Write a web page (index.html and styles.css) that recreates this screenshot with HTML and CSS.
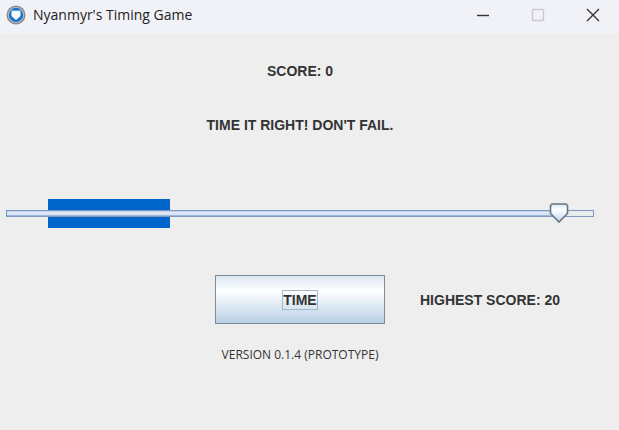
FILE: index.html
```html
<!DOCTYPE html>
<html lang="en">
<head>
<meta charset="utf-8">
<meta name="viewport" content="width=device-width, initial-scale=1">
<title>Nyanmyr's Timing Game</title>
<link rel="stylesheet" href="styles.css">
</head>
<body>
<header class="titlebar">
  <svg class="app-icon" viewBox="0 0 20 20" aria-hidden="true">
    <circle cx="10" cy="10" r="9.500" fill="#858b93"/>
    <circle cx="10" cy="10" r="8" fill="#c3c8ce"/>
    <circle cx="10" cy="10" r="7.200" fill="#2273c6"/>
    <path d="M5.500 5.800h9v5.200L10 15l-4.500-4z" fill="#f8fbff" stroke="#8fb4dc" stroke-width=".6"/>
  </svg>
  <h1 class="title">Nyanmyr's Timing Game</h1>
  <div class="window-controls">
    <button class="window-button" type="button" aria-label="Minimize">
      <svg viewBox="0 0 14 14" aria-hidden="true"><path d="M1 7.500h12"/></svg>
    </button>
    <button class="window-button" type="button" aria-label="Maximize" disabled>
      <svg viewBox="0 0 14 14" aria-hidden="true"><rect x="1.500" y="1.500" width="11" height="11" rx="1"/></svg>
    </button>
    <button class="window-button" type="button" aria-label="Close">
      <svg viewBox="0 0 14 14" aria-hidden="true"><path d="M1 1l12 12M13 1L1 13"/></svg>
    </button>
  </div>
</header>
<main class="game">
  <p class="label score">SCORE: 0</p>
  <label class="label message" for="timing">TIME IT RIGHT! DON'T FAIL.</label>
  <div class="timeline">
    <div class="target"></div>
    <input class="slider" id="timing" type="range" min="0" max="1000" value="957">
  </div>
  <div class="actions">
    <button class="time-button" type="button"><span class="time-text">TIME</span></button>
    <p class="label">HIGHEST SCORE: 20</p>
  </div>
  <p class="version">VERSION 0.1.4 (PROTOTYPE)</p>
</main>
</body>
</html>
```
FILE: styles.css
```css
* {
  box-sizing: border-box;
}

body {
  margin: 0;
  min-height: 100vh;
  background: #eeeeee;
  color: #333333;
  font-family: "Liberation Sans", Arial, sans-serif;
}

.titlebar {
  display: flex;
  align-items: center;
  height: 34px;
  padding: 0 0 4px 6px;
  background: #f1f2f8;
}

.app-icon {
  width: 20px;
  height: 20px;
  margin-right: 7px;
}

.title {
  margin: 0;
  color: #222222;
  font: 400 14px/20px "Open Sans", "Noto Sans", sans-serif;
}

.window-controls {
  display: flex;
  margin-left: auto;
}

.window-button {
  display: grid;
  place-items: center;
  width: 55px;
  height: 30px;
  padding: 0 0 0 3px;
  border: 0;
  background: none;
  color: #333333;
}

.window-button:disabled {
  color: #c8c9ce;
}

.window-button svg {
  width: 14px;
  height: 14px;
  fill: none;
  stroke: currentColor;
  stroke-width: 1.4;
}

.game {
  display: flex;
  flex-direction: column;
  padding: 28px 25px 0 6px;
}

.label {
  margin: 0;
  font-size: 14px;
  font-weight: 700;
  line-height: 18px;
}

.score,
.message {
  margin-bottom: 36px;
  text-align: center;
}

.timeline {
  display: grid;
  align-items: center;
  height: 29px;
  margin-top: 29px;
}

.target,
.slider {
  grid-area: 1 / 1;
}

.target {
  width: 21%;
  height: 29px;
  margin-left: 7%;
  background: #0066cc;
  background-clip: content-box;
  padding: 0 1px;
}

.slider {
  width: 100%;
  height: 21px;
  margin: 0;
  appearance: none;
  background: none;
}

.slider::-webkit-slider-runnable-track {
  height: 7px;
  border: 1px solid #7f96bd;
  background:
    linear-gradient(90deg, transparent 95%, #e9edf0 95%),
    linear-gradient(#a9c2e8, #e3ecf6 30%, #d4e1f0 70%, #86a4d4);
}

.slider::-webkit-slider-thumb {
  width: 20px;
  height: 20px;
  margin-top: -8px;
  appearance: none;
  background: url("data:image/svg+xml,%3Csvg xmlns='http://www.w3.org/2000/svg' viewBox='0 0 20 20'%3E%3ClinearGradient id='g' x2='0' y2='1'%3E%3Cstop stop-color='%23d5e5f5'/%3E%3Cstop offset='.3' stop-color='white'/%3E%3Cstop offset='1' stop-color='%23b8d4ee'/%3E%3C/linearGradient%3E%3Cpath d='M3 1h14l1.500 1.500v8L10 19l-8.500-8.500v-8z' fill='url(%23g)' stroke='%23687480' stroke-width='1.6'/%3E%3C/svg%3E") center / contain no-repeat;
}

.actions {
  display: grid;
  grid-template-columns: 1fr 170px 1fr;
  align-items: center;
  column-gap: 35px;
  margin-top: 47px;
}

.time-button {
  grid-column: 2;
  height: 49px;
  padding: 0;
  border: 1px solid #7a8a99;
  background: linear-gradient(#dde8f3, #ffffff 32%, #f4f8fc 42%, #b8cfe5);
  color: #333333;
  font: 700 14px/18px "Liberation Sans", Arial, sans-serif;
}

.time-text {
  display: inline-block;
  border: 1px solid #a3b8cc;
}

.version {
  margin: 22px 0 0;
  font: 400 12px/18px "Open Sans", "Noto Sans", sans-serif;
  text-align: center;
}
```
